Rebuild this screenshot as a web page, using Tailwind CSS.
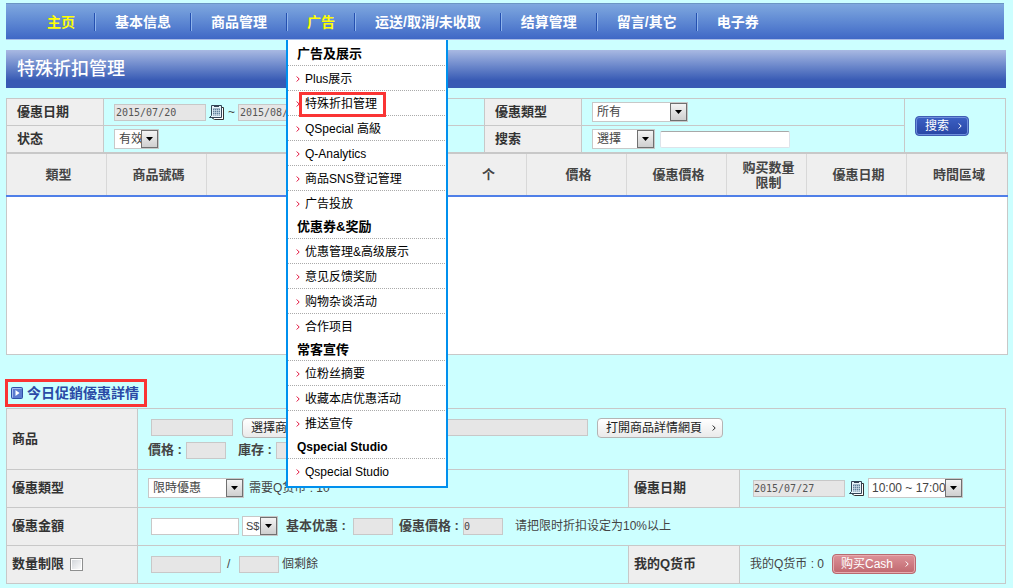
<!DOCTYPE html>
<html lang="zh">
<head>
<meta charset="utf-8">
<title>特殊折扣管理</title>
<script src="https://cdn.jsdelivr.net/npm/@tailwindcss/browser@4"></script>
</head>
<body class="min-h-screen bg-[#ccffff] pt-[3px] pr-[7px] pb-1 pl-[6px] text-[12px] leading-4 text-[#444] font-['Liberation_Sans','Noto_Sans_CJK_SC',sans-serif]">
<svg class="hidden">
  <symbol id="chev" viewBox="0 0 4 6"><path d="M.7.5 3.2 3 .7 5.5" fill="none" stroke="currentColor" stroke-width="1"/></symbol>
  <symbol id="arrow" viewBox="0 0 7 4"><path d="M0 0h7L3.500 4z" fill="#000"/></symbol>
  <symbol id="cal" viewBox="0 0 15 15">
    <path d="M4.500 2.500h10v12h-9l-3-2" fill="#fff" stroke="#333"/>
    <path d="M2.500.5h10v12h-12l2-2z" fill="#e8f4fa" stroke="#345"/>
    <path d="M5 1.500h5" stroke="#345"/>
    <path d="M4 3.500h7v7H4z" fill="#5f7f98"/>
    <path d="M4 5.500h7M4 7.500h7M4 9.500h7M5.500 4v7M7.500 4v7M9.500 4v7" stroke="#d8e8f2" stroke-width=".6"/>
  </symbol>
</svg>

<nav class="mr-[2px] h-[37px] border-t border-b border-t-[#6b95c4] border-b-[#a9bde6] bg-linear-to-b from-[#7fa8df] to-[#4068c6] pl-[22px]">
  <ul class="flex h-full items-center text-[14px] leading-[18px] font-bold text-white">
    <li class="flex"><a href="#" class="px-[19px] text-[#ffff00]">主页</a><i class="border-l border-r border-l-[#2450b0] border-r-[#8fb4ec]"></i></li>
    <li class="flex"><a href="#" class="px-[19px]">基本信息</a><i class="border-l border-r border-l-[#2450b0] border-r-[#8fb4ec]"></i></li>
    <li class="flex"><a href="#" class="px-[19px]">商品管理</a><i class="border-l border-r border-l-[#2450b0] border-r-[#8fb4ec]"></i></li>
    <li class="relative flex h-full items-center"><a href="#" class="px-[19px] text-[#ffff00]">广告</a><i class="h-[18px] border-l border-r border-l-[#2450b0] border-r-[#8fb4ec]"></i>
      <div class="absolute top-[36px] -left-[2px] z-10 w-[162px] border-x-2 border-b-2 border-[#0090ee] bg-white pr-px pb-[2px] text-[12px] font-normal text-black">
        <h3 class="flex h-[26px] items-center border-b border-dotted border-[#aaa] pt-[3px] pl-[9px] text-[13px] font-bold">广告及展示</h3>
        <a href="#" class="flex h-[25px] items-center gap-[5px] border-b border-dotted border-[#aaa] pt-[2px] pl-2"><svg class="h-[6px] w-1 text-[#e0103c]"><use href="#chev"/></svg>Plus展示</a>
        <a href="#" class="relative flex h-[25px] items-center gap-[5px] border-b border-dotted border-[#aaa] pt-[2px] pl-2"><svg class="h-[6px] w-1 text-[#e0103c]"><use href="#chev"/></svg>特殊折扣管理<span class="absolute top-px left-[11px] h-[25px] w-[87px] border-3 border-[#fa3434]"></span></a>
        <a href="#" class="flex h-[25px] items-center gap-[5px] border-b border-dotted border-[#aaa] pt-[2px] pl-2"><svg class="h-[6px] w-1 text-[#e0103c]"><use href="#chev"/></svg>QSpecial 高級</a>
        <a href="#" class="flex h-[25px] items-center gap-[5px] border-b border-dotted border-[#aaa] pt-[2px] pl-2"><svg class="h-[6px] w-1 text-[#e0103c]"><use href="#chev"/></svg>Q-Analytics</a>
        <a href="#" class="flex h-[25px] items-center gap-[5px] border-b border-dotted border-[#aaa] pt-[2px] pl-2"><svg class="h-[6px] w-1 text-[#e0103c]"><use href="#chev"/></svg>商品SNS登记管理</a>
        <a href="#" class="flex h-6 items-center gap-[5px] pt-[2px] pl-2"><svg class="h-[6px] w-1 text-[#e0103c]"><use href="#chev"/></svg>广告投放</a>
        <h3 class="flex h-6 items-center border-b border-dotted border-[#aaa] pl-[9px] text-[13px] font-bold">优惠券&amp;奖励</h3>
        <a href="#" class="flex h-[25px] items-center gap-[5px] border-b border-dotted border-[#aaa] pt-[2px] pl-2"><svg class="h-[6px] w-1 text-[#e0103c]"><use href="#chev"/></svg>优惠管理&amp;高级展示</a>
        <a href="#" class="flex h-[25px] items-center gap-[5px] border-b border-dotted border-[#aaa] pt-[2px] pl-2"><svg class="h-[6px] w-1 text-[#e0103c]"><use href="#chev"/></svg>意见反馈奖励</a>
        <a href="#" class="flex h-[25px] items-center gap-[5px] border-b border-dotted border-[#aaa] pt-[2px] pl-2"><svg class="h-[6px] w-1 text-[#e0103c]"><use href="#chev"/></svg>购物杂谈活动</a>
        <a href="#" class="flex h-6 items-center gap-[5px] pt-[2px] pl-2"><svg class="h-[6px] w-1 text-[#e0103c]"><use href="#chev"/></svg>合作项目</a>
        <h3 class="flex h-[23px] items-center border-b border-dotted border-[#aaa] pt-px pl-[9px] text-[13px] font-bold">常客宣传</h3>
        <a href="#" class="flex h-[25px] items-center gap-[5px] border-b border-dotted border-[#aaa] pt-[2px] pl-2"><svg class="h-[6px] w-1 text-[#e0103c]"><use href="#chev"/></svg>位粉丝摘要</a>
        <a href="#" class="flex h-[25px] items-center gap-[5px] border-b border-dotted border-[#aaa] pt-[2px] pl-2"><svg class="h-[6px] w-1 text-[#e0103c]"><use href="#chev"/></svg>收藏本店优惠活动</a>
        <a href="#" class="flex h-6 items-center gap-[5px] pt-[2px] pl-2"><svg class="h-[6px] w-1 text-[#e0103c]"><use href="#chev"/></svg>推送宣传</a>
        <h3 class="flex h-6 items-center border-b border-dotted border-[#aaa] pt-px pl-[9px] text-[12px] font-bold">Qspecial Studio</h3>
        <a href="#" class="flex h-[25px] items-center gap-[5px] pl-2"><svg class="h-[6px] w-1 text-[#e0103c]"><use href="#chev"/></svg>Qspecial Studio</a>
      </div>
    </li>
    <li class="flex"><a href="#" class="px-[19px]">运送/取消/未收取</a><i class="border-l border-r border-l-[#2450b0] border-r-[#8fb4ec]"></i></li>
    <li class="flex"><a href="#" class="px-[19px]">结算管理</a><i class="border-l border-r border-l-[#2450b0] border-r-[#8fb4ec]"></i></li>
    <li class="flex"><a href="#" class="px-[19px]">留言/其它</a><i class="border-l border-r border-l-[#2450b0] border-r-[#8fb4ec]"></i></li>
    <li class="flex"><a href="#" class="px-[19px]">电子券</a></li>
  </ul>
</nav>

<h1 class="mt-[10px] flex h-[38px] items-center bg-linear-to-b from-[#a9b9e2] to-[#385ab4] to-80% pl-[11px] text-[18px] leading-6 font-medium text-white">特殊折扣管理</h1>

<table class="mt-[10px] w-full table-fixed border-collapse border border-[#c8c8c8]">
  <colgroup><col class="w-[97px]"><col><col class="w-[97px]"><col class="w-[323px]"><col class="w-[101px]"></colgroup>
  <tr class="h-[27px]">
    <th class="border border-[#c8c8c8] bg-[#efefef] pl-[10px] text-left text-[13px] text-[#333]"><label for="d1">優惠日期</label></th>
    <td class="border border-[#c8c8c8] pl-[10px]"><div class="flex items-center">
      <input id="d1" readonly value="2015/07/20" class="h-[17px] w-[92px] border border-[#c8c8c8] bg-[#e6e6e6] pl-px font-['DejaVu_Sans_Mono',monospace] text-[10px] text-[#555]">
      <button aria-label="日曆" class="ml-[3px] size-[15px]"><svg class="size-full"><use href="#cal"/></svg></button>
      <span class="mx-1 w-[6px]">~</span>
      <input aria-label="結束日期" readonly value="2015/08/20" class="h-[17px] w-[92px] border border-[#c8c8c8] bg-[#e6e6e6] pl-px font-['DejaVu_Sans_Mono',monospace] text-[10px] text-[#555]">
    </div></td>
    <th class="border border-[#c8c8c8] bg-[#efefef] pl-[10px] text-left text-[13px] text-[#333]"><label for="s1">優惠類型</label></th>
    <td class="border border-[#c8c8c8] pl-[10px]"><div class="relative w-24">
      <select id="s1" class="block h-5 w-full appearance-none border border-[#c8c8c8] bg-white pl-1 text-[12px]"><option>所有</option></select>
      <span class="pointer-events-none absolute top-px right-px flex h-[18px] w-[17px] items-center justify-center border border-[#707070] bg-linear-to-b from-[#f4f4f4] to-[#cfcfcf]"><svg class="h-1 w-[7px]"><use href="#arrow"/></svg></span>
    </div></td>
    <td rowspan="2" class="border border-[#c8c8c8] pl-[10px]">
      <button class="flex h-5 w-[54px] items-center justify-between rounded-[4px] border border-[#3f5fb4] bg-linear-to-b from-[#3c60c4] to-[#2846a4] pr-[6px] pl-[9px] text-white ring-1 ring-[#6f8fdc] ring-inset">搜索<svg class="h-[6px] w-1"><use href="#chev"/></svg></button>
    </td>
  </tr>
  <tr class="h-[27px]">
    <th class="border border-[#c8c8c8] bg-[#efefef] pl-[10px] text-left text-[13px] text-[#333]"><label for="s2">状态</label></th>
    <td class="border border-[#c8c8c8] pl-[10px]"><div class="relative w-[45px]">
      <select id="s2" class="block h-5 w-full appearance-none border border-[#c8c8c8] bg-white pl-1 text-[12px]"><option>有效</option></select>
      <span class="pointer-events-none absolute top-px right-px flex h-[18px] w-[17px] items-center justify-center border border-[#707070] bg-linear-to-b from-[#f4f4f4] to-[#cfcfcf]"><svg class="h-1 w-[7px]"><use href="#arrow"/></svg></span>
    </div></td>
    <th class="border border-[#c8c8c8] bg-[#efefef] pl-[10px] text-left text-[13px] text-[#333]"><label for="s3">搜索</label></th>
    <td class="border border-[#c8c8c8] pl-[10px]"><div class="flex items-center gap-[5px]"><div class="relative w-[63px]">
      <select id="s3" class="block h-5 w-full appearance-none border border-[#c8c8c8] bg-white pl-1 text-[12px]"><option>選擇</option></select>
      <span class="pointer-events-none absolute top-px right-px flex h-[18px] w-[17px] items-center justify-center border border-[#707070] bg-linear-to-b from-[#f4f4f4] to-[#cfcfcf]"><svg class="h-1 w-[7px]"><use href="#arrow"/></svg></span>
    </div>
      <input aria-label="搜索內容" class="h-[17px] w-[130px] rounded-[2px] border border-[#dde3ea] border-t-[#a8a8a8] bg-white px-1">
    </div></td>
  </tr>
</table>

<table class="-mt-px -mr-[2px] w-[calc(100%+2px)] table-fixed border-collapse border border-t-2 border-[#c8c8c8] bg-white">
  <colgroup><col class="w-[100px]"><col class="w-[100px]"><col><col class="w-[80px]"><col class="w-[100px]"><col class="w-[100px]"><col class="w-[80px]"><col class="w-[100px]"><col class="w-[101px]"></colgroup>
  <thead>
    <tr class="h-[43px] border-b-2 border-b-[#4f7fe8] bg-[#efefef] text-[13px] leading-[15px] text-[#444]">
      <th class="pl-1">類型</th>
      <th class="border-l border-[#d8d8d8] pl-1">商品號碼</th>
      <th class="border-l border-[#d8d8d8] pl-1"></th>
      <th class="border-l border-[#d8d8d8] pl-1">个</th>
      <th class="border-l border-[#d8d8d8] pl-1">價格</th>
      <th class="border-l border-[#d8d8d8] pl-1">優惠價格</th>
      <th class="border-l border-[#d8d8d8] pl-1">购买数量<br>限制</th>
      <th class="border-l border-[#d8d8d8] pl-1">優惠日期</th>
      <th class="border-l border-[#d8d8d8] pl-1">時間區域</th>
    </tr>
  </thead>
  <tbody><tr class="h-[158px]"><td colspan="9"></td></tr></tbody>
</table>

<h2 class="mt-6 -ml-px flex h-[28px] w-fit items-center gap-1 border-3 border-[#fa3434] pr-[5px] pl-[3px] text-[14px] leading-[18px] font-bold text-[#2a4aa6]">
  <svg class="size-3" viewBox="0 0 12 12"><rect x=".5" y=".5" width="11" height="11" rx="1" fill="#5b7cd0" stroke="#2f4fa8"/><path d="M1.500 10.500v-9h9" fill="none" stroke="#a9bdf0"/><path d="M4.500 3 8.500 6l-4 3z" fill="#fff"/></svg>
  今日促銷優惠詳情
</h2>

<table class="mt-px w-full table-fixed border-collapse border border-[#c8c8c8]">
  <colgroup><col class="w-[131px]"><col><col class="w-[111px]"><col class="w-[266px]"></colgroup>
  <tr class="h-[61px]">
    <th class="border border-[#c8c8c8] bg-[#eee] pl-[5px] text-left text-[13px] text-[#333]"><label for="p1">商品</label></th>
    <td colspan="3" class="border border-[#c8c8c8] pl-[10px]">
      <div class="flex h-5 items-center">
        <input id="p1" readonly class="ml-[3px] h-[17px] w-[82px] border border-[#c8c8c8] bg-[#e6e6e6]">
        <button class="ml-[9px] flex h-5 w-[90px] items-center justify-between rounded-[4px] border border-[#b4b4b4] bg-linear-to-b from-white to-[#eaeaea] pr-[6px] pl-2 text-[#222]">選擇商品<svg class="h-[6px] w-1"><use href="#chev"/></svg></button>
        <input aria-label="商品名稱" readonly class="ml-[6px] h-[17px] w-[250px] border border-[#c8c8c8] bg-[#e6e6e6]">
        <button class="ml-[9px] flex h-5 w-[126px] items-center justify-between rounded-[4px] border border-[#b4b4b4] bg-linear-to-b from-white to-[#eaeaea] pr-[6px] pl-2 text-[#222]">打開商品詳情網頁<svg class="h-[6px] w-1"><use href="#chev"/></svg></button>
      </div>
      <div class="mt-[3px] flex h-[19px] items-center text-[13px] font-bold">
        <label for="p2" class="w-[38px]">價格 :</label>
        <input id="p2" readonly class="h-[17px] w-10 border border-[#c8c8c8] bg-[#e6e6e6]">
        <label for="p3" class="ml-3 w-[38px]">庫存 :</label>
        <input id="p3" readonly class="h-[17px] w-10 border border-[#c8c8c8] bg-[#e6e6e6]">
      </div>
    </td>
  </tr>
  <tr class="h-[38px]">
    <th class="border border-[#c8c8c8] bg-[#eee] pl-[5px] text-left text-[13px] text-[#333]"><label for="t1">優惠類型</label></th>
    <td class="border border-[#c8c8c8] pl-[10px]"><div class="flex items-center gap-[5px]"><div class="relative w-24">
      <select id="t1" class="block h-5 w-full appearance-none border border-[#c8c8c8] bg-white pl-1 text-[12px]"><option>限時優惠</option></select>
      <span class="pointer-events-none absolute top-px right-px flex h-[18px] w-[17px] items-center justify-center border border-[#707070] bg-linear-to-b from-[#f4f4f4] to-[#cfcfcf]"><svg class="h-1 w-[7px]"><use href="#arrow"/></svg></span>
    </div>需要Q货币 : 10</div></td>
    <th class="border border-[#c8c8c8] bg-[#eee] pl-[5px] text-left text-[13px] text-[#333]"><label for="t2">優惠日期</label></th>
    <td class="border border-[#c8c8c8] pl-[13px]"><div class="flex items-center">
      <input id="t2" readonly value="2015/07/27" class="h-[17px] w-[92px] border border-[#c8c8c8] bg-[#e6e6e6] font-['DejaVu_Sans_Mono',monospace] text-[10px] text-[#555]">
      <button aria-label="日曆" class="ml-1 size-[15px]"><svg class="size-full"><use href="#cal"/></svg></button>
      <div class="relative ml-1 w-[95px]">
      <select aria-label="時間" class="block h-5 w-full appearance-none border border-[#c8c8c8] bg-white pl-[3px] text-[12px]"><option>10:00 ~ 17:00</option></select>
      <span class="pointer-events-none absolute top-px right-px flex h-[18px] w-[17px] items-center justify-center border border-[#707070] bg-linear-to-b from-[#f4f4f4] to-[#cfcfcf]"><svg class="h-1 w-[7px]"><use href="#arrow"/></svg></span>
      </div>
    </div></td>
  </tr>
  <tr class="h-[38px]">
    <th class="border border-[#c8c8c8] bg-[#eee] pl-[5px] text-left text-[13px] text-[#333]"><label for="a1">優惠金額</label></th>
    <td colspan="3" class="border border-[#c8c8c8] pl-[13px]"><div class="flex items-center">
      <input id="a1" class="h-[17px] w-[88px] border border-[#c8c8c8] bg-white px-1">
      <div class="relative ml-[3px] w-9">
      <select aria-label="貨幣" class="block h-5 w-full appearance-none border border-[#c8c8c8] bg-white pl-[3px] text-[11px]"><option>S$</option></select>
      <span class="pointer-events-none absolute top-px right-px flex h-[18px] w-[17px] items-center justify-center border border-[#707070] bg-linear-to-b from-[#f4f4f4] to-[#cfcfcf]"><svg class="h-1 w-[7px]"><use href="#arrow"/></svg></span>
      </div>
      <label for="a2" class="ml-2 w-[67px] text-[13px] font-bold">基本优惠 :</label>
      <input id="a2" readonly class="h-[17px] w-10 border border-[#c8c8c8] bg-[#e6e6e6]">
      <label for="a3" class="ml-[6px] w-16 text-[13px] font-bold">優惠價格 :</label>
      <input id="a3" readonly value="0" class="h-[17px] w-10 border border-[#c8c8c8] bg-[#e6e6e6] font-['DejaVu_Sans_Mono',monospace] text-[10px]">
      <span class="ml-3">请把限时折扣设定为10%以上</span>
    </div></td>
  </tr>
  <tr class="h-[38px]">
    <th class="border border-[#c8c8c8] bg-[#eee] pl-[5px] text-left text-[13px] text-[#333]"><div class="flex items-center gap-[6px]"><label for="q0">数量制限</label><input id="q0" type="checkbox" class="size-[13px] appearance-none border border-[#8e8f8f] bg-linear-to-br from-[#cfd3d8] to-white ring-1 ring-white ring-inset"></div></th>
    <td class="border border-[#c8c8c8] pl-[13px]"><div class="flex items-center">
      <input aria-label="数量制限" readonly class="h-[17px] w-[70px] border border-[#c8c8c8] bg-[#e6e6e6]">
      <span class="mx-[6px] w-[6px]">/</span>
      <input id="q2" readonly class="h-[17px] w-10 border border-[#c8c8c8] bg-[#e6e6e6]">
      <label for="q2" class="ml-[3px]">個剩餘</label>
    </div></td>
    <th class="border border-[#c8c8c8] bg-[#eee] pl-[5px] text-left text-[13px] text-[#333]">我的Q货币</th>
    <td class="border border-[#c8c8c8] pl-[10px]"><div class="flex items-center">
      <span class="w-[82px]">我的Q货币 : 0</span>
      <button class="flex h-5 w-[84px] items-center justify-between rounded-[4px] border border-[#b86a70] bg-linear-to-b from-[#dc9298] to-[#c0686f] pr-[6px] pl-2 text-white ring-1 ring-[#e6acb0] ring-inset">购买Cash<svg class="h-[6px] w-1"><use href="#chev"/></svg></button>
    </div></td>
  </tr>
</table>
</body>
</html>
